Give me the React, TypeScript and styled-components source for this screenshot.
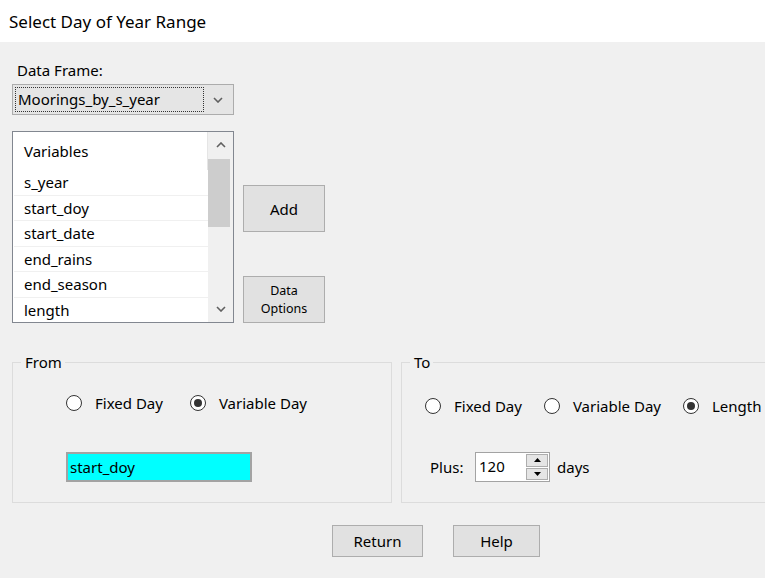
import React from 'react';
import styled, { createGlobalStyle } from 'styled-components';

const GlobalStyle = createGlobalStyle`
  html, body {
    margin: 0;
    padding: 0;
    background: #f0f0f0;
    overflow: hidden;
  }
  body {
    font-family: "Noto Sans", "Open Sans", sans-serif;
    font-size: 15px;
    color: #000;
  }
`;

const Window = styled.div`
  width: 765px;
  height: 578px;
  overflow: hidden;
`;

const TitleBar = styled.div`
  height: 42px;
  background: #fff;
  display: flex;
  align-items: center;
  padding-left: 9px;
  font-size: 17px;
`;

const Body = styled.div`
  padding: 0 0 0 12px;
`;

const FieldLabel = styled.div`
  margin-top: 18px;
  line-height: 20px;
  padding-left: 5px;
`;

const Combo = styled.div`
  margin-top: 4px;
  width: 222px;
  height: 31px;
  box-sizing: border-box;
  border: 1px solid #acacac;
  background: #e5e5e5;
  display: flex;
  align-items: center;
  padding: 2px;
`;

const ComboText = styled.div`
  flex: 0 0 189px;
  height: 25px;
  box-sizing: border-box;
  border: 1px dotted #333;
  padding-left: 2px;
  line-height: 23px;
`;

const ComboArrow = styled.div`
  flex: 1;
  display: flex;
  justify-content: center;
  align-items: center;
`;

const ListRow = styled.div`
  margin-top: 16px;
  display: flex;
  align-items: flex-start;
`;

const ListBox = styled.div`
  width: 222px;
  height: 192px;
  box-sizing: border-box;
  border: 1px solid #828790;
  background: #fff;
  display: flex;
`;

const ListItems = styled.div`
  flex: 1;
  overflow: hidden;
  padding-left: 1px;
`;

const ListHeader = styled.div`
  height: 38px;
  line-height: 38px;
  padding-left: 10px;
  border-right: 1px solid #e5e5e5;
  box-sizing: border-box;
`;

const ListItem = styled.div`
  height: 25.5px;
  line-height: 25px;
  padding-left: 10px;
  box-sizing: border-box;
  border-bottom: 1px solid #f0f0f0;
`;

const ScrollBar = styled.div`
  width: 25px;
  background: #f0f0f0;
  display: flex;
  flex-direction: column;
  align-items: stretch;
`;

const ScrollArrow = styled.div`
  height: 26px;
  display: flex;
  align-items: center;
  justify-content: center;
`;

const ScrollTrack = styled.div`
  flex: 1;
  padding-top: 1px;
`;

const ScrollThumb = styled.div`
  height: 68px;
  margin-right: 3px;
  background: #cdcdcd;
`;

const SideButtons = styled.div`
  margin-left: 9px;
  padding-top: 54px;
  display: flex;
  flex-direction: column;
  gap: 44px;
`;

const Button = styled.button<{ $w: number; $h: number; $small?: boolean }>`
  width: ${p => p.$w}px;
  height: ${p => p.$h}px;
  box-sizing: border-box;
  border: 1px solid #adadad;
  background: #e1e1e1;
  font-family: inherit;
  font-size: ${p => (p.$small ? 12.5 : 15)}px;
  line-height: ${p => (p.$small ? 18 : 20)}px;
  color: #000;
  padding: 0;
`;

const GroupRow = styled.div`
  margin-top: 29px;
  display: flex;
  gap: 9px;
`;

const Group = styled.fieldset<{ $w: number }>`
  width: ${p => p.$w}px;
  height: 151px;
  box-sizing: border-box;
  margin: 0;
  padding: 0;
  border: 1px solid #dcdcdc;
  flex-shrink: 0;
`;

const Legend = styled.legend`
  margin-left: 8px;
  padding: 0 3px 0 4px;
  line-height: 20px;
`;

const RadioRow = styled.div<{ $top: number; $left: number; $gap: number }>`
  display: flex;
  align-items: center;
  gap: ${p => p.$gap}px;
  margin-top: ${p => p.$top}px;
  padding-left: ${p => p.$left}px;
`;

const Radio = styled.label`
  display: flex;
  align-items: center;
  gap: 13px;
  white-space: nowrap;
  line-height: 20px;
`;

const RadioCircle = styled.span<{ $on?: boolean }>`
  width: 16px;
  height: 16px;
  box-sizing: border-box;
  border-radius: 50%;
  border: 1px solid #333;
  background: #fff;
  display: flex;
  align-items: center;
  justify-content: center;
  &::after {
    content: '';
    display: ${p => (p.$on ? 'block' : 'none')};
    width: 8px;
    height: 8px;
    border-radius: 50%;
    background: #333;
  }
`;

const VarBox = styled.div`
  margin: 39px 0 0 53px;
  width: 186px;
  height: 30px;
  box-sizing: border-box;
  border: 2px solid #a3a3a3;
  background: #00ffff;
  padding-left: 2px;
  line-height: 26px;
`;

const PlusRow = styled.div`
  margin: 36px 0 0 28px;
  display: flex;
  align-items: center;
`;

const PlusLabel = styled.span`
  width: 45px;
`;

const Spinner = styled.div`
  width: 75px;
  height: 30px;
  box-sizing: border-box;
  border: 1px solid #a3a3a3;
  background: #fff;
  display: flex;
  margin-right: 7px;
`;

const SpinText = styled.div`
  flex: 1;
  padding-left: 3px;
  line-height: 26px;
`;

const SpinButtons = styled.div`
  width: 22px;
  display: flex;
  flex-direction: column;
  padding: 1px 1px 1px 0;
  gap: 1px;
`;

const SpinBtn = styled.div`
  flex: 1;
  background: #e5e5e5;
  border: 1px solid #adadad;
  display: flex;
  align-items: center;
  justify-content: center;
`;

const BottomRow = styled.div`
  margin-top: 22px;
  padding-left: 320px;
  display: flex;
  gap: 30px;
`;

const Chevron = ({ up }: { up?: boolean }) => (
  <svg width="10" height="6" viewBox="0 0 10 6">
    <path
      d={up ? 'M1 5 L5 1 L9 5' : 'M1 1 L5 5 L9 1'}
      fill="none"
      stroke="#606060"
      strokeWidth="1.6"
    />
  </svg>
);

const Tri = ({ up }: { up?: boolean }) => (
  <svg width="7" height="4" viewBox="0 0 7 4">
    <path d={up ? 'M0 4 L3.5 0 L7 4 Z' : 'M0 0 L3.5 4 L7 0 Z'} fill="#000" />
  </svg>
);

const variables = ['s_year', 'start_doy', 'start_date', 'end_rains', 'end_season', 'length'];

export default function App() {
  return (
    <Window>
      <GlobalStyle />
      <TitleBar>Select Day of Year Range</TitleBar>
      <Body>
        <FieldLabel>Data Frame:</FieldLabel>
        <Combo>
          <ComboText>Moorings_by_s_year</ComboText>
          <ComboArrow>
            <Chevron />
          </ComboArrow>
        </Combo>

        <ListRow>
          <ListBox>
            <ListItems>
              <ListHeader>Variables</ListHeader>
              {variables.map(v => (
                <ListItem key={v}>{v}</ListItem>
              ))}
            </ListItems>
            <ScrollBar>
              <ScrollArrow>
                <Chevron up />
              </ScrollArrow>
              <ScrollTrack>
                <ScrollThumb />
              </ScrollTrack>
              <ScrollArrow>
                <Chevron />
              </ScrollArrow>
            </ScrollBar>
          </ListBox>
          <SideButtons>
            <Button $w={82} $h={47}>Add</Button>
            <Button $w={82} $h={47} $small>
              Data
              <br />
              Options
            </Button>
          </SideButtons>
        </ListRow>

        <GroupRow>
          <Group $w={380}>
            <Legend>From</Legend>
            <RadioRow $top={21} $left={53} $gap={27}>
              <Radio>
                <RadioCircle />
                Fixed Day
              </Radio>
              <Radio>
                <RadioCircle $on />
                Variable Day
              </Radio>
            </RadioRow>
            <VarBox>start_doy</VarBox>
          </Group>
          <Group $w={400}>
            <Legend>To</Legend>
            <RadioRow $top={24} $left={23} $gap={22}>
              <Radio>
                <RadioCircle />
                Fixed Day
              </Radio>
              <Radio>
                <RadioCircle />
                Variable Day
              </Radio>
              <Radio>
                <RadioCircle $on />
                Length
              </Radio>
            </RadioRow>
            <PlusRow>
              <PlusLabel>Plus:</PlusLabel>
              <Spinner>
                <SpinText>120</SpinText>
                <SpinButtons>
                  <SpinBtn>
                    <Tri up />
                  </SpinBtn>
                  <SpinBtn>
                    <Tri />
                  </SpinBtn>
                </SpinButtons>
              </Spinner>
              <span>days</span>
            </PlusRow>
          </Group>
        </GroupRow>

        <BottomRow>
          <Button $w={91} $h={32}>Return</Button>
          <Button $w={87} $h={32}>Help</Button>
        </BottomRow>
      </Body>
    </Window>
  );
}
